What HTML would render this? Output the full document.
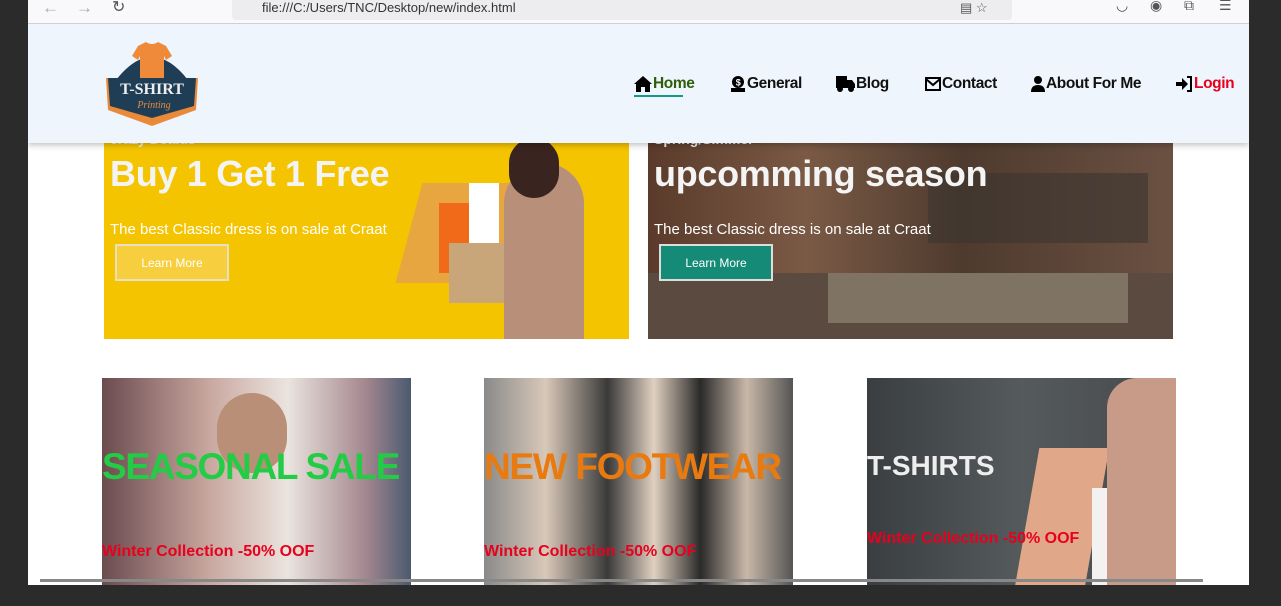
<!DOCTYPE html>
<html><head><meta charset="utf-8"><style>
*{margin:0;padding:0;box-sizing:border-box}
body{width:1281px;height:606px;overflow:hidden;background:#2b2b2b;font-family:"Liberation Sans",sans-serif;position:relative}
.abs{position:absolute}
.chrome{left:28px;top:0;width:1221px;height:24px;background:#f9f9fb;border-bottom:1px solid #cfcfd8}
.url{left:232px;top:0;width:780px;height:20px;background:#ededf0;border-radius:0 0 4px 4px;font-size:13px;color:#333;padding:0 0 0 30px;line-height:15px}
.page{left:28px;top:24px;width:1221px;height:561px;background:#fff;overflow:hidden}
.nav{left:0;top:0;width:1221px;height:119px;background:#eef5fc;box-shadow:0 2px 6px rgba(0,0,0,.25);z-index:5}
.nav a{position:absolute;top:51px;font-weight:bold;font-size:15.5px;color:#111;text-decoration:none;white-space:nowrap;letter-spacing:-0.4px;display:flex;align-items:center}
.nav svg{margin-right:1px}
.b1{left:76px;top:119px;width:525px;height:196px;background:#f5c400;overflow:hidden}
.b2{left:620px;top:119px;width:525px;height:196px;background:linear-gradient(90deg,#5a3a2a,#7a5a45 30%,#4e3a2e 60%,#6b5142);overflow:hidden}
.h1{font-weight:bold;font-size:36px;color:#f4f4f4;letter-spacing:-0.3px}
.sub{font-size:15px;color:#fff}
.btn{font-size:12px;color:#fff;text-align:center;line-height:34px;width:114px;height:37px}
.card{top:354px;width:309px;height:210px;overflow:hidden}
.ct{font-weight:bold;font-size:37px;left:0;white-space:nowrap;letter-spacing:-1.3px}
.cw{font-weight:bold;font-size:16px;color:#e8001c;left:0;white-space:nowrap}
</style></head><body>
<div class="abs chrome">
 <div class="abs" style="left:14px;top:-2px;color:#aaa;font-size:17px">←</div>
 <div class="abs" style="left:48px;top:-2px;color:#aaa;font-size:17px">→</div>
 <div class="abs" style="left:84px;top:-3px;color:#555;font-size:16px">↻</div>
</div>
<div class="abs url" style="left:232px">file:///C:/Users/TNC/Desktop/new/index.html<span style="position:absolute;left:728px;color:#555">▤ ☆</span></div>
<div class="abs" style="left:1116px;top:-3px;color:#555;font-size:14px">◡</div>
<div class="abs" style="left:1150px;top:-3px;color:#555;font-size:14px">◉</div>
<div class="abs" style="left:1184px;top:-3px;color:#555;font-size:14px">⧉</div>
<div class="abs" style="left:1219px;top:-3px;color:#555;font-size:14px">☰</div>
<div class="abs page">
 <div class="abs nav">
  <svg class="abs" style="left:76px;top:14px" width="96" height="92" viewBox="0 0 96 92">
   <path d="M12 42 Q48 -4 84 42 Z" fill="#1f3d55"/>
   <path d="M34 8 L42 4 Q48 8 54 4 L62 8 L68 18 L62 22 L60 18 L60 44 L36 44 L36 18 L34 22 L28 18 Z" fill="#ee8a3a"/>
   <path d="M2 40 L94 40 L92 72 L48 88 L4 72 Z" fill="#e98a3b"/>
   <path d="M4 40 L92 40 L90 68 L48 80 L6 68 Z" fill="#1f3d55"/>
   <text x="48" y="56" font-family="Liberation Serif" font-weight="bold" font-size="16" fill="#eee" text-anchor="middle">T-SHIRT</text>
   <text x="50" y="70" font-family="Liberation Serif" font-style="italic" font-size="10" fill="#e98a3b" text-anchor="middle">Printing</text>
  </svg>
  <a style="left:606px;color:#2f5d0a"><svg width="18" height="16" viewBox="0 0 18 16"><path d="M9 0 L18 8 L16 8 L16 16 L11 16 L11 11 L7 11 L7 16 L2 16 L2 8 L0 8 Z" fill="#000"/></svg>Home</a>
  <div class="abs" style="left:606px;top:71px;width:49px;height:2px;background:#119a88"></div>
  <a style="left:702px"><svg width="16" height="16" viewBox="0 0 16 16"><circle cx="8" cy="6" r="6" fill="#000"/><text x="8" y="9.5" font-size="9" fill="#fff" text-anchor="middle" font-weight="bold">$</text><rect x="1" y="12" width="14" height="4" fill="#000"/></svg>General</a>
  <a style="left:808px"><svg width="19" height="16" viewBox="0 0 19 16"><rect x="0" y="0" width="11" height="12" fill="#000"/><path d="M11 4 L16 4 L19 8 L19 12 L11 12 Z" fill="#000"/><circle cx="4" cy="13" r="3" fill="#000"/><circle cx="15" cy="13" r="3" fill="#000"/></svg>Blog</a>
  <a style="left:897px"><svg width="16" height="14" viewBox="0 0 16 14"><rect x="1" y="1" width="14" height="12" fill="none" stroke="#000" stroke-width="2"/><path d="M1 2 L8 8 L15 2" fill="none" stroke="#000" stroke-width="2"/></svg>Contact</a>
  <a style="left:1003px"><svg width="14" height="16" viewBox="0 0 14 16"><circle cx="7" cy="4" r="4" fill="#000"/><path d="M0 16 Q0 9 7 9 Q14 9 14 16 Z" fill="#000"/></svg>About For Me</a>
  <a style="left:1148px;color:#e8001c"><svg width="17" height="16" viewBox="0 0 17 16"><path d="M0 6 L6 6 L6 2 L12 8 L6 14 L6 10 L0 10 Z" fill="#000"/><path d="M11 1 L15 1 L15 15 L11 15" fill="none" stroke="#000" stroke-width="2"/></svg>Login</a>
 </div>
 <div class="abs b1">
  <div class="abs" style="left:305px;top:40px;width:110px;height:100px;background:#e8a640;transform:skewX(-15deg)"></div>
  <div class="abs" style="left:335px;top:60px;width:40px;height:70px;background:#f06a1a"></div>
  <div class="abs" style="left:365px;top:40px;width:30px;height:90px;background:#fff"></div>
  <div class="abs" style="left:345px;top:100px;width:80px;height:60px;background:#c9a57a"></div>
  <div class="abs" style="left:400px;top:20px;width:80px;height:176px;background:#b8907a;border-radius:40px 40px 0 0"></div>
  <div class="abs" style="left:405px;top:-5px;width:50px;height:60px;background:#3a2420;border-radius:25px"></div>
  <div class="abs" style="left:6px;top:-12px;font-weight:bold;font-size:14px;color:#eee">crazy Dealus</div>
  <div class="abs h1" style="left:6px;top:10px">Buy 1 Get 1 Free</div>
  <div class="abs sub" style="left:6px;top:78px">The best Classic dress is on sale at Craat</div>
  <div class="abs btn" style="left:11px;top:101px;border:2px solid #e8e0c0;background:#f7cf3e">Learn More</div>
 </div>
 <div class="abs b2">
  <div class="abs" style="left:0;top:130px;width:525px;height:66px;background:#5b4a3f"></div>
  <div class="abs" style="left:180px;top:130px;width:300px;height:50px;background:#8f8575;opacity:.7"></div>
  <div class="abs" style="left:280px;top:30px;width:220px;height:70px;background:#3a3530;opacity:.6"></div>
  <div class="abs" style="left:6px;top:-12px;font-weight:bold;font-size:14px;color:#eee">Spring/Simmer</div>
  <div class="abs h1" style="left:6px;top:10px">upcomming season</div>
  <div class="abs sub" style="left:6px;top:78px">The best Classic dress is on sale at Craat</div>
  <div class="abs btn" style="left:11px;top:101px;border:2px solid #ddd;background:#148a77">Learn More</div>
 </div>
 <div class="abs card" style="left:74px;background:linear-gradient(90deg,#6c4b4f,#c9a8a0 35%,#eae4de 60%,#a68890 85%,#4a5a70)">
  <div class="abs" style="left:115px;top:15px;width:70px;height:80px;background:#b98f78;border-radius:35px"></div>
  <div class="abs ct" style="top:68px;color:#22cc44">SEASONAL SALE</div>
  <div class="abs cw" style="top:165px">Winter Collection -50% OOF</div>
 </div>
 <div class="abs card" style="left:456px;background:linear-gradient(90deg,#8a8a8a,#d8c8b8 20%,#3a3a3a 40%,#e0d0c0 55%,#2a2a2a 70%,#c8b8a8 85%,#555)">
  <div class="abs ct" style="top:68px;color:#e87a10">NEW FOOTWEAR</div>
  <div class="abs cw" style="top:165px">Winter Collection -50% OOF</div>
 </div>
 <div class="abs card" style="left:839px;background:linear-gradient(90deg,#3a3e40,#555a5c 50%,#46494b)">
  <div class="abs" style="left:160px;top:70px;width:70px;height:140px;background:#e0a888;transform:skewX(-10deg)"></div>
  <div class="abs" style="left:225px;top:110px;width:40px;height:100px;background:#f4f2f0"></div>
  <div class="abs" style="left:240px;top:0;width:70px;height:210px;background:#c89a88;border-radius:30px 0 0 0"></div>
  <div class="abs ct" style="top:72px;color:#eee;font-size:28px;letter-spacing:0">T-SHIRTS</div>
  <div class="abs cw" style="top:152px">Winter Collection -50% OOF</div>
 </div>
 <div class="abs" style="left:12px;top:555px;width:1163px;height:3px;background:#888"></div>
</div>
</body></html>
